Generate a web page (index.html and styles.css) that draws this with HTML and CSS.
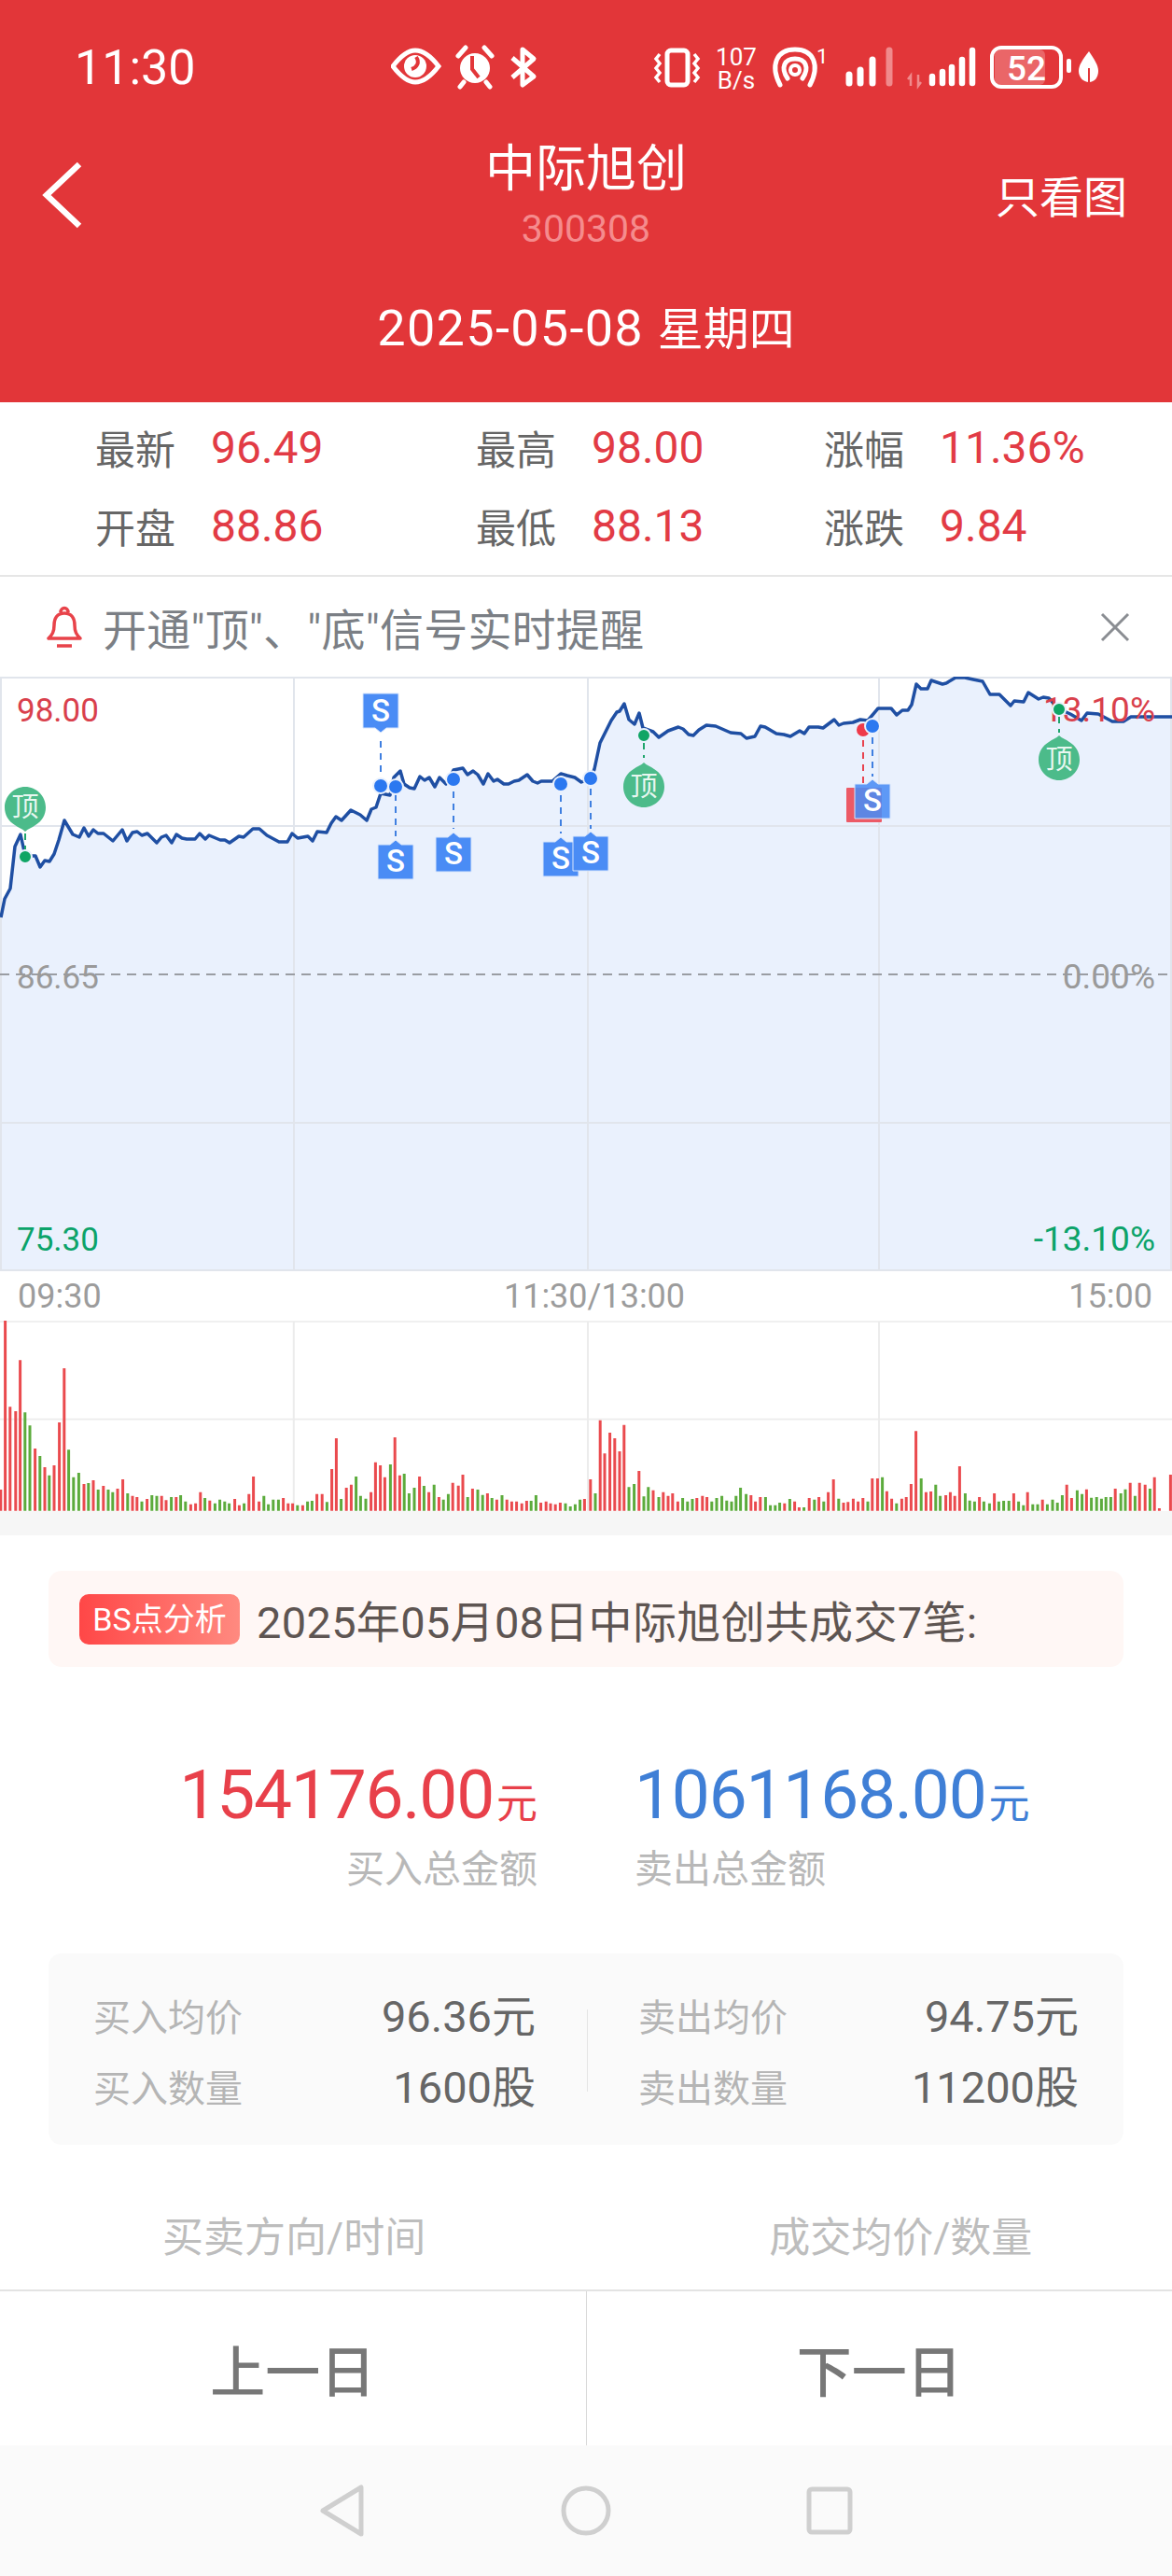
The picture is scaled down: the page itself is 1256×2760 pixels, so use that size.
FILE: index.html
```html
<!DOCTYPE html>
<html lang="zh-CN">

<head>
    <meta charset="UTF-8">
    <title>中际旭创</title>
    <link rel="stylesheet" href="styles.css">
</head>

<body>

    <div class="page">

        <div class="header">
            <div class="status-bar">
                <span class="status-time">11:30</span>
                <svg class="status-icons" viewBox="419 40 760 70" width="760" height="70">
                    <!-- eye -->
                    <path d="M421 71C431 58 438 54 445 54C452 54 460 58 470 71C460 84 452 88 445 88C438 88 431 84 421 71Z" fill="none" stroke="#fff" stroke-width="5" />
                    <circle cx="445" cy="71" r="12" fill="#fff" />
                    <path d="M446 61c4 6 1 11-5 13" fill="none" stroke="#e23639" stroke-width="4" />
                    <!-- alarm -->
                    <circle cx="509" cy="73" r="16" fill="#fff" />
                    <path d="M506 60v14l7 9" fill="none" stroke="#e23639" stroke-width="4" />
                    <path d="M491 60l8-9M527 60l-8-9M497 88l-4 5M521 88l4 5" stroke="#fff" stroke-width="5" stroke-linecap="round" />
                    <!-- bluetooth -->
                    <path d="M549 62L572 82L560 91V53L572 63L549 83" fill="none" stroke="#fff" stroke-width="5" stroke-linejoin="round" />
                    <!-- vibrate -->
                    <rect x="715" y="54" width="22" height="37" rx="4" fill="none" stroke="#fff" stroke-width="5" />
                    <path d="M707 58l-4 5 4 5-4 5 4 5-4 5 4 5M744 58l4 5-4 5 4 5-4 5 4 5-4 5" fill="none" stroke="#fff" stroke-width="3.5" />
                    <!-- net speed -->
                    <text class="icon-text" x="789" y="70" text-anchor="middle">107</text>
                    <text class="icon-text" x="789" y="95" text-anchor="middle">B/s</text>
                    <!-- hotspot -->
                    <path d="M836 91C825 70 832 53 852 53C872 53 879 70 868 91M844 84C836 72 841 63 852 63C863 63 868 72 860 84" fill="none" stroke="#fff" stroke-width="5" stroke-linecap="round" />
                    <circle cx="852" cy="75" r="5" fill="none" stroke="#fff" stroke-width="4" />
                    <text class="icon-text-sm" x="875" y="68">1</text>
                    <!-- signal 1 -->
                    <path d="M910 89V80M922 89V75M935 89V64" stroke="#fff" stroke-width="7" stroke-linecap="round" />
                    <path d="M953 89V54" stroke="#f08a8c" stroke-width="7" stroke-linecap="round" />
                    <!-- signal 2 -->
                    <path d="M976 92V81l-3 4M984 80v12l3-4" fill="none" stroke="#f08a8c" stroke-width="2.5" />
                    <path d="M999 89V82M1010 89V77M1020 89V72M1031 89V64M1042 89V54" stroke="#fff" stroke-width="6.5" stroke-linecap="round" />
                    <!-- battery -->
                    <rect x="1066" y="53" width="54" height="38" rx="6" fill="#ea6668" />
                    <rect x="1063" y="51" width="74" height="42" rx="10" fill="none" stroke="#fff" stroke-width="4" />
                    <text class="icon-text-batt" x="1100" y="86" text-anchor="middle">52</text>
                    <rect x="1143" y="63" width="5" height="15" rx="2" fill="#fff" />
                    <path d="M1167 55C1160 64 1156 70 1156 76C1156 83 1161 88 1167 88C1173 88 1177 83 1177 76C1177 70 1173 64 1167 55Z" fill="#fff" />
                    <path d="M1167 88V73" stroke="#e23639" stroke-width="2" />
                </svg>
            </div>

            <div class="title-row">
                <svg class="back-icon" viewBox="0 0 44 72" width="44" height="72">
                    <path d="M40 3L5 36L40 69" fill="none" stroke="#fff" stroke-width="6.5" />
                </svg>
                <div class="title-block">
                    <div class="stock-name">中际旭创</div>
                    <div class="stock-code">300308</div>
                </div>
                <div class="only-chart">只看图</div>
            </div>

            <div class="trade-date">2025-05-08 <span class="trade-week">星期四</span></div>
        </div>

        <div class="quote-grid">
            <div class="quote-item"><span class="quote-label">最新</span><span class="quote-value">96.49</span></div>
            <div class="quote-item"><span class="quote-label">最高</span><span class="quote-value">98.00</span></div>
            <div class="quote-item"><span class="quote-label">涨幅</span><span class="quote-value">11.36%</span></div>
            <div class="quote-item"><span class="quote-label">开盘</span><span class="quote-value">88.86</span></div>
            <div class="quote-item"><span class="quote-label">最低</span><span class="quote-value">88.13</span></div>
            <div class="quote-item"><span class="quote-label">涨跌</span><span class="quote-value">9.84</span></div>
        </div>

        <div class="alert-bar">
            <svg class="bell-icon" viewBox="0 0 38 46" width="38" height="46">
                <path d="M19 8C11 8 8 14 8 21C8 28 6 31 2 35H36C32 31 30 28 30 21C30 14 27 8 19 8Z" fill="none" stroke="#e8434a" stroke-width="3.5" stroke-linejoin="round" />
                <path d="M15 7C15 1 23 1 23 7" fill="none" stroke="#e8434a" stroke-width="3.5" />
                <path d="M11 43H27" stroke="#e8434a" stroke-width="3.5" />
            </svg>
            <span class="alert-text">开通"顶"、"底"信号实时提醒</span>
            <svg class="close-icon" viewBox="0 0 34 34" width="34" height="34">
                <path d="M3 3L31 31M31 3L3 31" stroke="#8a8d92" stroke-width="3" />
            </svg>
        </div>

        <svg class="price-chart" viewBox="0 725 1256 637" width="1256" height="637">
            <path class="price-fill" d="M1 983L5 963L11 952L16 907L22 894L27 917L38 917L43 929L48 922L53 923L58 915L63 900L69 879L78 894L85 897L90 887L95 896L100 889L105 893L111 893L121 901L131 889L136 901L142 892L147 891L152 895L158 893L162 897L168 903L173 897L178 895L184 903L189 894L195 898L200 899L209 899L214 893L220 899L224 895L236 900L241 900L246 903L256 896L261 897L271 888L278 888L286 895L299 902L308 902L313 893L319 898L330 896L335 901L340 891L350 892L355 882L360 875L366 879L376 868L386 873L393 879L398 867L403 865L408 850L418 852L422 833L429 826L433 840L439 844L444 845L450 832L455 836L460 833L466 843L471 833L478 840L486 825L496 823L501 830L507 826L512 830L518 840L523 829L529 837L533 835L540 840L545 840L551 837L556 836L565 830L571 837L576 839L580 837L592 837L601 829L608 831L616 833L623 838L633 834L637 824L643 796L655 772L661 763L664 762L669 754L674 771L680 776L685 764L689 780L700 784L706 790L716 783L727 779L732 781L738 787L743 788L749 782L757 777L767 778L783 785L794 786L800 791L809 789L815 778L820 779L832 786L840 787L847 789L857 783L862 786L867 779L877 779L882 780L894 771L899 777L904 775L914 774L922 771L930 772L941 759L955 759L961 766L967 761L973 761L977 755L982 733L987 738L994 738L998 729L1010 733L1014 732L1024 726L1034 726L1043 728L1053 730L1061 744L1071 744L1083 756L1087 751L1097 752L1102 742L1113 749L1118 747L1124 748L1134 759L1147 765L1159 772L1165 764L1177 765L1192 773L1204 773L1212 768L1220 768L1256 768V1361H0V983Z" />
            <path class="grid-line" d="M0 726H1256M0 885H1256M0 1203H1256M0 1361H1256M1 726V1361M315 726V1361M630 726V1361M942 726V1361M1255 726V1361" />
            <path class="mid-line" d="M0 1044H1256" />
            <text class="axis-text axis-up" x="18" y="773">98.00</text>
            <text class="axis-text axis-flat" x="18" y="1059">86.65</text>
            <text class="axis-text axis-down" x="18" y="1340">75.30</text>
            <text class="axis-text axis-right axis-flat" x="1238" y="1059">0.00%</text>
            <text class="axis-text axis-right axis-down" x="1238" y="1340">-13.10%</text>
            <path class="price-line" d="M1 983L5 963L11 952L16 907L22 894L27 917L38 917L43 929L48 922L53 923L58 915L63 900L69 879L78 894L85 897L90 887L95 896L100 889L105 893L111 893L121 901L131 889L136 901L142 892L147 891L152 895L158 893L162 897L168 903L173 897L178 895L184 903L189 894L195 898L200 899L209 899L214 893L220 899L224 895L236 900L241 900L246 903L256 896L261 897L271 888L278 888L286 895L299 902L308 902L313 893L319 898L330 896L335 901L340 891L350 892L355 882L360 875L366 879L376 868L386 873L393 879L398 867L403 865L408 850L418 852L422 833L429 826L433 840L439 844L444 845L450 832L455 836L460 833L466 843L471 833L478 840L486 825L496 823L501 830L507 826L512 830L518 840L523 829L529 837L533 835L540 840L545 840L551 837L556 836L565 830L571 837L576 839L580 837L592 837L601 829L608 831L616 833L623 838L633 834L637 824L643 796L655 772L661 763L664 762L669 754L674 771L680 776L685 764L689 780L700 784L706 790L716 783L727 779L732 781L738 787L743 788L749 782L757 777L767 778L783 785L794 786L800 791L809 789L815 778L820 779L832 786L840 787L847 789L857 783L862 786L867 779L877 779L882 780L894 771L899 777L904 775L914 774L922 771L930 772L941 759L955 759L961 766L967 761L973 761L977 755L982 733L987 738L994 738L998 729L1010 733L1014 732L1024 726L1034 726L1043 728L1053 730L1061 744L1071 744L1083 756L1087 751L1097 752L1102 742L1113 749L1118 747L1124 748L1134 759L1147 765L1159 772L1165 764L1177 765L1192 773L1204 773L1212 768L1220 768L1256 768" />
            <text class="axis-text axis-right axis-up" x="1238" y="773">13.10%</text>

            <defs>
                <path id="sell-tag" d="M0 5H13L19 0L25 5H38V42H0Z" />
                <path id="top-drop" d="M0 -26C3 -23 7 -22 11 -19C18 -15 22 -8 22 0C22 12 12 22 0 22C-12 22 -22 12 -22 0C-22 -8 -18 -15 -11 -19C-7 -22 -3 -23 0 -26Z" />
            </defs>

            <!-- 顶 signals -->
            <path class="dash-green" d="M27 893V911M690 796V812M1135 768V785" />
            <use class="drop-mark" href="#top-drop" transform="translate(27 865) rotate(180)" />
            <use class="drop-mark" href="#top-drop" transform="translate(690 843)" />
            <use class="drop-mark" href="#top-drop" transform="translate(1135 814)" />
            <text class="drop-text" x="27" y="875">顶</text>
            <text class="drop-text" x="690" y="853">顶</text>
            <text class="drop-text" x="1135" y="824">顶</text>
            <circle class="dot-green" cx="27" cy="918" r="7" />
            <circle class="dot-green" cx="690" cy="788" r="7" />
            <circle class="dot-green" cx="1135" cy="760" r="7" />

            <!-- buy signal, mostly covered -->
            <path class="dash-red" d="M925 793V840" />
            <rect class="buy-tag" x="907" y="844" width="38" height="37" rx="1" />
            <circle class="dot-red" cx="925" cy="782" r="8" />

            <!-- sell signals -->
            <path class="dash-blue" d="M408 794V832M424 851V896M486 848V888M601 852V893M633 845V888M935 790V832" />
            <use class="sell-mark" href="#sell-tag" transform="translate(427 785) rotate(180)" />
            <use class="sell-mark" href="#sell-tag" transform="translate(405 900)" />
            <use class="sell-mark" href="#sell-tag" transform="translate(467 892)" />
            <use class="sell-mark" href="#sell-tag" transform="translate(582 897)" />
            <use class="sell-mark" href="#sell-tag" transform="translate(614 891)" />
            <use class="sell-mark sell-over" href="#sell-tag" transform="translate(916 835)" />
            <text class="sell-text" x="408" y="773">S</text>
            <text class="sell-text" x="424" y="934">S</text>
            <text class="sell-text" x="486" y="926">S</text>
            <text class="sell-text" x="601" y="931">S</text>
            <text class="sell-text" x="633" y="925">S</text>
            <text class="sell-text" x="935" y="869">S</text>
            <circle class="dot-blue" cx="408" cy="842" r="8" />
            <circle class="dot-blue" cx="424" cy="843" r="8" />
            <circle class="dot-blue" cx="486" cy="835" r="8" />
            <circle class="dot-blue" cx="601" cy="840" r="8" />
            <circle class="dot-blue" cx="633" cy="834" r="8" />
            <circle class="dot-blue" cx="935" cy="778" r="8" />
        </svg>

        <div class="time-axis">
            <span>09:30</span>
            <span class="time-mid">11:30/13:00</span>
            <span>15:00</span>
        </div>

        <svg class="volume-chart" viewBox="0 225 3140 612" width="1256" height="204" preserveAspectRatio="none">
            <path class="vol-grid" d="M0 228H3140M0 542H3140M787 228V836M1575 228V836M2355 228V836" />
            <path class="vol-red" d="M2 836V768M14 836V225M27 836V502M42 836V516M54 836V352M94 836V636M120 836V696M145 836V690M159 836V552M172 836V378M225 836V750M250 836V738M277 836V756M315 836V765M329 836V735M355 836V788M367 836V792M394 836V798M433 836V788M445 836V802M472 836V792M511 836V815M524 836V812M537 836V776M562 836V803M629 836V798M641 836V818M667 836V782M679 836V726M694 836V806M759 836V795M772 836V812M784 836V812M811 836V818M849 836V782M863 836V782M889 836V702M901 836V603M928 836V762M941 836V752M994 836V776M1006 836V680M1019 836V690M1031 836V728M1058 836V600M1071 836V722M1124 836V726M1149 836V776M1176 836V792M1213 836V746M1228 836V755M1240 836V720M1266 836V765M1306 836V780M1331 836V800M1358 836V800M1371 836V806M1384 836V806M1398 836V812M1411 836V804M1449 836V810M1463 836V806M1475 836V812M1488 836V815M1501 836V810M1566 836V798" />
            <path class="vol-green" d="M67 836V520M80 836V562M107 836V660M132 836V722M184 836V640M197 836V728M211 836V714M237 836V747M263 836V768M290 836V768M302 836V776M342 836V780M380 836V806M407 836V786M420 836V788M459 836V792M484 836V786M497 836V806M549 836V795M576 836V812M589 836V800M602 836V806M614 836V812M654 836V812M707 836V788M719 836V815M732 836V800M746 836V800M797 836V818M824 836V806M836 836V804M876 836V808M914 836V798M954 836V726M966 836V788M980 836V797M1046 836V687M1083 836V717M1096 836V780M1110 836V762M1136 836V756M1163 836V752M1188 836V800M1201 836V782M1253 836V792M1280 836V768M1293 836V785M1318 836V795M1345 836V786M1423 836V804M1436 836V786M1515 836V812M1528 836V822M1541 836V815M1554 836V800" />
            <g transform="translate(1570 0)">
                <path class="vol-red" d="M12 836V735M38 836V545M50 836V652M64 836V585M77 836V603M90 836V645M102 836V560M142 836V708M180 836V770M207 836V776M220 836V788M232 836V780M246 836V806M297 836V795M312 836V788M324 836V792M442 836V786M454 836V806M467 836V792M532 836V812M559 836V806M571 836V825M598 836V795M624 836V792M649 836V776M663 836V735M690 836V810M702 836V808M716 836V797M729 836V806M742 836V795M767 836V732M781 836V732M806 836V773M819 836V797M846 836V797M858 836V792M871 836V750M884 836V580M911 836V776M924 836V774M964 836V786M976 836V776M988 836V788M1001 836V693M1054 836V792M1094 836V780M1146 836V780M1183 836V776M1223 836V800M1288 836V752M1301 836V795M1341 836V767M1418 836V765M1458 836V746M1483 836V746M1498 836V752M1523 836V728M1536 836V828M1566 836V720" />
                <path class="vol-green" d="M25 836V780M115 836V760M129 836V750M155 836V790M167 836V760M195 836V792M259 836V795M272 836V806M285 836V798M337 836V806M350 836V795M364 836V788M377 836V803M390 836V806M402 836V788M414 836V762M429 836V782M481 836V792M494 836V818M507 836V818M519 836V810M546 836V798M584 836V825M612 836V800M637 836V806M677 836V797M755 836V806M794 836V728M832 836V812M898 836V732M937 836V752M949 836V788M1016 836V780M1028 836V803M1041 836V806M1066 836V806M1081 836V812M1106 836V806M1119 836V804M1133 836V804M1159 836V806M1172 836V818M1197 836V815M1210 836V815M1236 836V815M1250 836V800M1263 836V810M1276 836V786M1316 836V770M1329 836V782M1354 836V794M1368 836V792M1381 836V797M1393 836V792M1406 836V792M1433 836V780M1445 836V767M1471 836V788M1511 836V765" />
            </g>
        </svg>

        <div class="gray-strip"></div>

        <div class="bs-card">
            <span class="bs-badge">BS点分析</span>
            <span class="bs-title">2025年05月08日中际旭创共成交7笔:</span>
        </div>

        <div class="totals">
            <div class="total-col total-buy">
                <div class="total-num">154176.00<span class="total-unit">元</span></div>
                <div class="total-label">买入总金额</div>
            </div>
            <div class="total-col total-sell">
                <div class="total-num">1061168.00<span class="total-unit">元</span></div>
                <div class="total-label">卖出总金额</div>
            </div>
        </div>

        <div class="avg-card">
            <div class="avg-col avg-col-left">
                <div class="avg-row"><span class="avg-label">买入均价</span><span class="avg-value">96.36元</span></div>
                <div class="avg-row"><span class="avg-label">买入数量</span><span class="avg-value">1600股</span></div>
            </div>
            <div class="avg-divider"></div>
            <div class="avg-col">
                <div class="avg-row"><span class="avg-label">卖出均价</span><span class="avg-value">94.75元</span></div>
                <div class="avg-row"><span class="avg-label">卖出数量</span><span class="avg-value">11200股</span></div>
            </div>
        </div>

        <div class="table-head">
            <span>买卖方向/时间</span>
            <span>成交均价/数量</span>
        </div>

        <div class="day-switch">
            <button class="day-btn">上一日</button>
            <button class="day-btn">下一日</button>
        </div>

        <div class="nav-bar">
            <svg viewBox="0 0 60 60" width="60" height="60">
                <path d="M50 5V55L9 30Z" fill="none" stroke="#cfcfcf" stroke-width="5" stroke-linejoin="round" />
            </svg>
            <svg viewBox="0 0 60 60" width="60" height="60">
                <circle cx="30" cy="30" r="24" fill="none" stroke="#cfcfcf" stroke-width="5" />
            </svg>
            <svg viewBox="0 0 60 60" width="60" height="60">
                <rect x="8" y="7" width="44" height="46" rx="3" fill="none" stroke="#cfcfcf" stroke-width="5" />
            </svg>
        </div>

    </div>

</body>

</html>
```

FILE: styles.css
```css
body {
    margin: 0;
    background: #fff;
    font-family: Roboto, "Noto Sans CJK SC", sans-serif;
}

.page {
    width: 1256px;
    height: 2760px;
    overflow: hidden;
}

/* header */

.header {
    height: 431px;
    background: #e23639;
    color: #fff;
}

.status-bar {
    display: flex;
    align-items: center;
    height: 144px;
    padding: 0 77px 0 80px;
}

.status-time {
    font-size: 52px;
}

.status-icons {
    align-self: flex-start;
    margin: 40px 0 0 auto;
}

.icon-text {
    font-size: 26px;
    fill: #fff;
}

.icon-text-sm {
    font-size: 22px;
    fill: #fff;
}

.icon-text-batt {
    font-size: 37px;
    font-weight: 500;
    fill: #fff;
}

.title-row {
    display: grid;
    grid-template-columns: 1fr auto 1fr;
    align-items: center;
    height: 126px;
}

.back-icon {
    margin-left: 45px;
}

.title-block {
    padding-top: 4px;
    text-align: center;
}

.stock-name {
    font-size: 54px;
    line-height: 68px;
}

.stock-code {
    font-size: 41px;
    line-height: 58px;
    color: #f58b8d;
}

.only-chart {
    justify-self: end;
    margin: -3px 48px 0 0;
    font-size: 47px;
}

.trade-date {
    margin-top: 52px;
    font-size: 54px;
    line-height: 60px;
    letter-spacing: 1.3px;
    text-align: center;
}

.trade-week {
    font-size: 49px;
    letter-spacing: 0;
}

/* quote numbers */

.quote-grid {
    display: grid;
    grid-template-columns: 408px 373px 1fr;
    grid-auto-rows: 84px;
    padding: 6px 0 11px 102px;
    border-bottom: 2px solid #e6e6e6;
}

.quote-item {
    display: flex;
    align-items: center;
}

.quote-label {
    width: 124px;
    font-size: 43px;
    color: #666;
}

.quote-value {
    font-size: 48px;
    color: #e23b45;
}

.alert-bar {
    display: flex;
    align-items: center;
    height: 107px;
    padding: 0 44px 0 50px;
}

.alert-text {
    margin-left: 22px;
    font-size: 47px;
    letter-spacing: 0.2px;
    color: #7b7f85;
}

.close-icon {
    margin-left: auto;
}

/* price chart */

.price-chart {
    display: block;
}

.price-fill {
    fill: #eaf1fd;
}

.grid-line {
    fill: none;
    stroke: #e1e5ec;
    stroke-width: 2;
}

.mid-line {
    fill: none;
    stroke: #9a9da3;
    stroke-width: 2;
    stroke-dasharray: 10 7;
}

.price-line {
    fill: none;
    stroke: #1f4fa3;
    stroke-width: 3.5;
    stroke-linejoin: round;
}

.axis-text {
    font-size: 35px;
}

.axis-right {
    font-size: 37px;
    text-anchor: end;
}

.axis-up {
    fill: #d9404c;
}

.axis-flat {
    fill: #9a9a9a;
}

.axis-down {
    fill: #0ca36a;
}

.dash-green,
.dash-red,
.dash-blue {
    fill: none;
    stroke-width: 2;
    stroke-dasharray: 7 6;
}

.dash-green {
    stroke: #1fa56c;
}

.dash-red {
    stroke: #e8434f;
}

.dash-blue {
    stroke: #3f7fe0;
}

.drop-mark {
    fill: #4cbb8a;
}

.drop-text {
    font-size: 29px;
    fill: #e8f7f0;
    text-anchor: middle;
}

.dot-green,
.dot-red,
.dot-blue {
    stroke: #eaf1fd;
    stroke-width: 2;
}

.dot-green {
    fill: #0fa565;
}

.dot-red {
    fill: #ef3a4a;
}

.dot-blue {
    fill: #2b78f0;
}

.buy-tag {
    fill: #ec5a66;
}

.sell-mark {
    fill: #4a8cf5;
    stroke: #d8e6fc;
    stroke-width: 1;
}

.sell-over {
    fill-opacity: 0.88;
}

.sell-text {
    font-size: 33px;
    font-weight: 500;
    fill: #fff;
    text-anchor: middle;
}

.time-axis {
    display: flex;
    justify-content: space-between;
    align-items: center;
    height: 53px;
    padding: 0 21px 0 19px;
    font-size: 36px;
    color: #9c9c9c;
}

.time-mid {
    margin-left: 20px;
}

.volume-chart {
    display: block;
}

.vol-grid {
    fill: none;
    stroke: #ececec;
    stroke-width: 5;
}

.vol-red,
.vol-green {
    fill: none;
    stroke-width: 7.5;
}

.vol-red {
    stroke: #ea4a4e;
}

.vol-green {
    stroke: #5cab3c;
}

.gray-strip {
    height: 26px;
    background: #f6f6f6;
}

/* BS summary */

.bs-card {
    display: flex;
    align-items: center;
    height: 103px;
    margin: 38px 52px 0;
    padding-left: 33px;
    border-radius: 14px;
    background: #fff7f5;
}

.bs-badge {
    width: 172px;
    height: 54px;
    border-radius: 10px;
    background: linear-gradient(90deg, #ff4747, #ff8a80);
    color: #fff;
    font-size: 34px;
    line-height: 54px;
    text-align: center;
}

.bs-title {
    margin-left: 18px;
    font-size: 47px;
    letter-spacing: 0.3px;
    color: #5e5552;
}

.totals {
    display: grid;
    grid-template-columns: 576px 1fr;
    column-gap: 104px;
    margin-top: 93px;
}

.total-buy {
    text-align: right;
    color: #e8404a;
}

.total-sell {
    color: #3f7fd6;
}

.total-num {
    font-size: 73px;
    line-height: 88px;
    letter-spacing: -1.2px;
    white-space: nowrap;
}

.total-unit {
    margin-left: 3px;
    font-size: 44px;
    letter-spacing: 0;
}

.total-label {
    margin-top: -2px;
    font-size: 41px;
    line-height: 56px;
    color: #b8b8b8;
}

.avg-card {
    display: flex;
    justify-content: space-between;
    align-items: center;
    height: 202px;
    margin: 62px 52px 0;
    padding: 3px 48px 0;
    border-radius: 14px;
    background: #fafafa;
}

.avg-col {
    flex: 0 0 472px;
}

.avg-col-left {
    flex-basis: 474px;
}

.avg-row {
    display: flex;
    justify-content: space-between;
    align-items: center;
    height: 76px;
}

.avg-label {
    font-size: 40px;
    color: #b5b5b5;
}

.avg-value {
    padding-bottom: 6px;
    font-size: 47px;
    color: #666;
}

.avg-divider {
    width: 1px;
    height: 88px;
    background: #e5e5e5;
}

.table-head {
    display: flex;
    gap: 368px;
    margin-top: 70px;
    padding-left: 174px;
    font-size: 44px;
    line-height: 60px;
    color: #bdbdbd;
}

.day-switch {
    display: flex;
    height: 165px;
    margin-top: 25px;
    border-top: 2px solid #e3e3e3;
}

.day-btn {
    flex: 1;
    padding: 0;
    border: none;
    background: #fff;
    font-family: inherit;
    font-size: 59px;
    font-weight: 500;
    color: #777;
}

.day-btn + .day-btn {
    border-left: 1px solid #d9d9d9;
}

.nav-bar {
    display: flex;
    justify-content: center;
    gap: 201px;
    height: 138px;
    padding-top: 40px;
    background: #fafafa;
}
```
